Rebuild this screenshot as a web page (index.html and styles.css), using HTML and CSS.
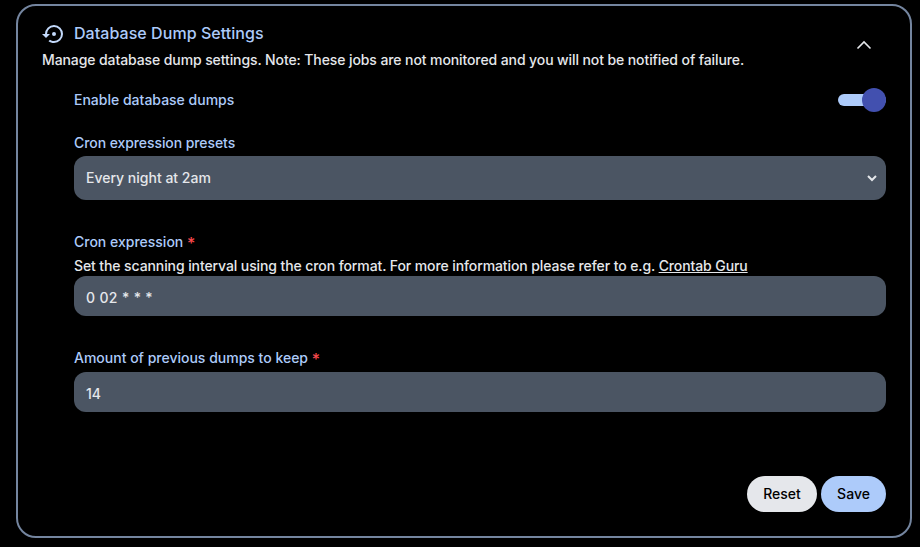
FILE: index.html
```html
<!DOCTYPE html>
<html lang="en">
<head>
<meta charset="utf-8">
<title>Database Dump Settings</title>
<link rel="stylesheet" href="styles.css">
</head>
<body>
<section class="card">
  <header class="head">
    <div class="head-text">
      <h2 class="title">
        <svg class="title-icon" viewBox="0 0 24 24" width="24" height="24"><path fill="currentColor" d="M12,3A9,9 0 0,0 3,12H0L4,16L8,12H5A7,7 0 0,1 12,5A7,7 0 0,1 19,12A7,7 0 0,1 12,19C10.5,19 9.09,18.5 7.94,17.7L6.5,19.14C8.04,20.3 9.94,21 12,21A9,9 0 0,0 21,12A9,9 0 0,0 12,3M14,12A2,2 0 0,0 12,10A2,2 0 0,0 10,12A2,2 0 0,0 12,14A2,2 0 0,0 14,12Z"/></svg>
        <span>Database Dump Settings</span>
      </h2>
      <p class="desc">Manage database dump settings. Note: These jobs are not monitored and you will not be notified of failure.</p>
    </div>
    <svg class="collapse" viewBox="0 0 24 24" width="24" height="24"><path fill="none" stroke="currentColor" stroke-width="1.6" d="M5.5 15.5l6.5-6.5 6.5 6.5"/></svg>
  </header>
  <form class="form">
    <div class="toggle-row">
      <span class="label">Enable database dumps</span>
      <span class="toggle"><span class="knob"></span></span>
    </div>
    <div class="field field-preset">
      <div class="label">Cron expression presets</div>
      <div class="select">
        <span>Every night at 2am</span>
        <svg viewBox="0 0 24 24" width="16" height="16"><path fill="none" stroke="currentColor" stroke-width="3" d="M6 9l6 6 6-6"/></svg>
      </div>
    </div>
    <div class="field field-cron">
      <div class="label">Cron expression <span class="req">*</span></div>
      <p class="help">Set the scanning interval using the cron format. For more information please refer to e.g. <a href="#">Crontab Guru</a></p>
      <div class="input input-cron">0 02 * * *</div>
    </div>
    <div class="field field-keep">
      <div class="label">Amount of previous dumps to keep <span class="req">*</span></div>
      <div class="input">14</div>
    </div>
    <div class="actions">
      <button type="button" class="btn btn-reset">Reset</button>
      <button type="button" class="btn btn-save">Save</button>
    </div>
  </form>
</section>
</body>
</html>
```
FILE: styles.css
```css
* { box-sizing: border-box; }
html, body { margin: 0; height: 547px; overflow: hidden; background: #000; }
body {
  padding: 4px 8px 9px 16px;
  font-family: "Inter", "Liberation Sans", sans-serif;
  font-size: 14px;
  color: #e5e7eb;
}
.card {
  height: 534px;
  border: 2px solid #74859f;
  border-radius: 20px;
  padding: 14px 24px 24px 24px;
}
.head { display: flex; justify-content: space-between; align-items: flex-start; }
.title {
  display: flex;
  align-items: center;
  gap: 8px;
  margin: 0;
  height: 26px;
  font-size: 16px;
  font-weight: 500;
  color: #adcbfa;
  letter-spacing: 0.05px;
}
.title-icon { color: #c3d9fb; margin-top: 2px; }
.desc { margin: 4px 0 0; height: 20px; line-height: 20px; font-weight: 500; white-space: nowrap; letter-spacing: -0.1px; }
.collapse { color: #e5e7eb; margin: 13px 10px 0 0; }
.form { padding-left: 32px; }
.label { color: #adcbfa; font-weight: 500; line-height: 20px; }
.toggle-row { display: flex; justify-content: space-between; align-items: center; height: 24px; margin-top: 18px; }
.toggle { display: block; position: relative; width: 48px; height: 12px; border-radius: 6px; background: #adcbfa; }
.knob { position: absolute; right: 0; top: -6px; width: 24px; height: 24px; border-radius: 50%; background: #4250af; }
.field-preset { margin-top: 21px; }
.field-preset .label { letter-spacing: -0.08px; }
.field-cron { margin-top: 32px; }
.field-keep { margin-top: 32px; }
.select, .input {
  display: flex;
  align-items: center;
  justify-content: space-between;
  background: #4b5563;
  border-radius: 12px;
  padding: 0 12px;
  font-weight: 500;
}
.select { height: 44px; margin-top: 3px; padding-right: 6px; }
.select span { margin-bottom: 2px; }
.input { height: 40px; padding-top: 2px; }
.input-cron { letter-spacing: 0.35px; }
.field-keep .input { margin-top: 4px; }
.help { margin: 4px 0 0; line-height: 20px; height: 20px; font-weight: 500; letter-spacing: -0.1px; }
.help a { color: #e5e7eb; text-decoration: underline; }
.req { color: #f8484c; font-size: 16px; line-height: 14px; vertical-align: -2px; }
.actions { display: flex; justify-content: flex-end; gap: 4px; margin-top: 64px; }
.btn {
  height: 36px;
  border: 0;
  border-radius: 18px;
  padding-bottom: 2px;
  font: 500 14px "Inter", "Liberation Sans", sans-serif;
  color: #000;
}
.btn-reset { width: 70px; background: #e5e7eb; }
.btn-save { width: 65px; background: #adcbfa; }
```
